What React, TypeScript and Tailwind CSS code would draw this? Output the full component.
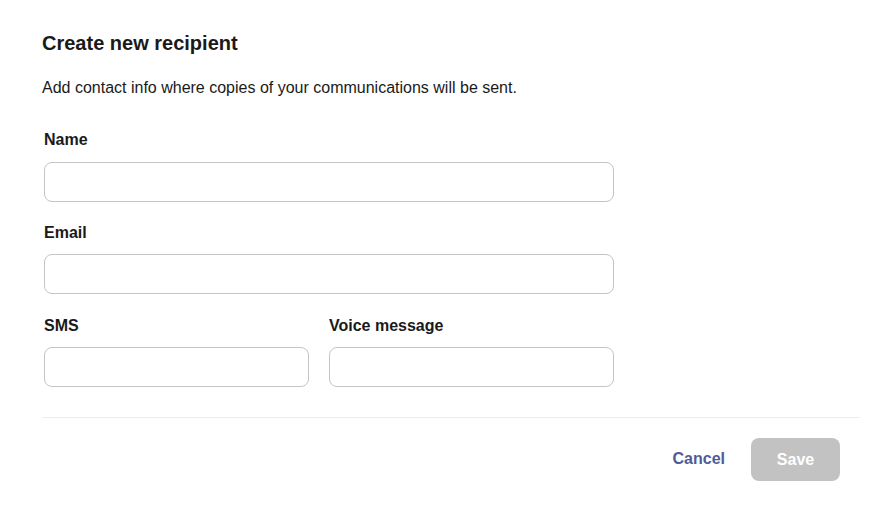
export default function App() {
  return (
    <div className="min-h-screen bg-white font-['Liberation_Sans',Arial,sans-serif] text-[#1a1a1a]">
      <div className="pl-[42px] pt-[31px] w-[860px] box-content">
        <h1 className="text-[20px] font-bold leading-[24px]">Create new recipient</h1>
        <p className="mt-[22px] text-[16px] leading-[22px]">
          Add contact info where copies of your communications will be sent.
        </p>

        <form className="mt-[31px] w-[570px] ml-[2px] flex flex-col">
          <label className="text-[16px] font-bold leading-[20px]">Name</label>
          <input className="mt-[12px] h-[40px] rounded-[8px] border border-[#c4c4c4] px-3 outline-none" />

          <label className="mt-[21px] text-[16px] font-bold leading-[20px]">Email</label>
          <input className="mt-[11px] h-[40px] rounded-[8px] border border-[#c4c4c4] px-3 outline-none" />

          <div className="mt-[22px] grid grid-cols-[265px_285px] gap-x-[20px]">
            <div className="flex flex-col">
              <label className="text-[16px] font-bold leading-[20px]">SMS</label>
              <input className="mt-[11px] h-[40px] rounded-[8px] border border-[#c4c4c4] px-3 outline-none" />
            </div>
            <div className="flex flex-col">
              <label className="text-[16px] font-bold leading-[20px]">Voice message</label>
              <input className="mt-[11px] h-[40px] rounded-[8px] border border-[#c4c4c4] px-3 outline-none" />
            </div>
          </div>
        </form>

        <div className="mt-[30px] w-[818px] border-t border-[#ededed]" />

        <div className="w-[798px] flex justify-end items-center gap-[26px] mt-[20px]">
          <button className="text-[16px] font-bold text-[#4e5c98] px-0 leading-[20px] -mt-[2px]">Cancel</button>
          <button className="h-[43px] w-[89px] rounded-[8px] bg-[#c2c2c2] text-white text-[16px] font-bold">
            Save
          </button>
        </div>
      </div>
    </div>
  );
}
